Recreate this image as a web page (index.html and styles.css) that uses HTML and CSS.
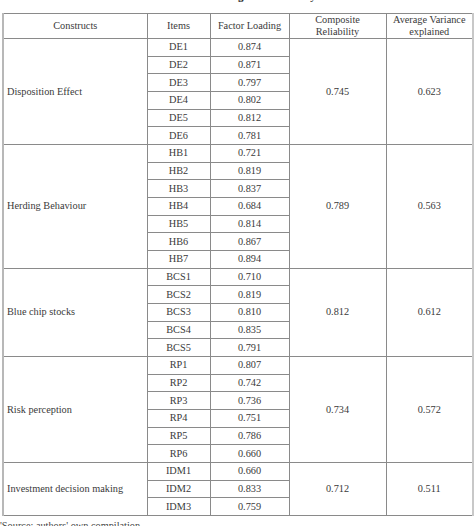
FILE: index.html
```html
<!DOCTYPE html>
<html>
<head>
<meta charset="utf-8">
<link rel="stylesheet" href="styles.css">
</head>
<body>
<div class="title"><span>Table 4: Factor Loading and Reliability</span></div>
<table class="tbl">
  <colgroup>
    <col class="c1"><col class="c2"><col class="c3"><col class="c4"><col class="c5">
  </colgroup>
  <thead>
    <tr class="hd">
      <th>Constructs</th><th>Items</th><th>Factor Loading</th><th>Composite<br>Reliability</th><th>Average Variance<br>explained</th>
    </tr>
  </thead>
  <tbody>
    <tr><td class="name" rowspan="6">Disposition Effect</td><td>DE1</td><td>0.874</td><td rowspan="6">0.745</td><td rowspan="6">0.623</td></tr>
    <tr><td>DE2</td><td>0.871</td></tr>
    <tr><td>DE3</td><td>0.797</td></tr>
    <tr><td>DE4</td><td>0.802</td></tr>
    <tr><td>DE5</td><td>0.812</td></tr>
    <tr><td>DE6</td><td>0.781</td></tr>

    <tr><td class="name" rowspan="7">Herding Behaviour</td><td>HB1</td><td>0.721</td><td rowspan="7">0.789</td><td rowspan="7">0.563</td></tr>
    <tr><td>HB2</td><td>0.819</td></tr>
    <tr><td>HB3</td><td>0.837</td></tr>
    <tr><td>HB4</td><td>0.684</td></tr>
    <tr><td>HB5</td><td>0.814</td></tr>
    <tr><td>HB6</td><td>0.867</td></tr>
    <tr><td>HB7</td><td>0.894</td></tr>

    <tr><td class="name" rowspan="5">Blue chip stocks</td><td>BCS1</td><td>0.710</td><td rowspan="5">0.812</td><td rowspan="5">0.612</td></tr>
    <tr><td>BCS2</td><td>0.819</td></tr>
    <tr><td>BCS3</td><td>0.810</td></tr>
    <tr><td>BCS4</td><td>0.835</td></tr>
    <tr><td>BCS5</td><td>0.791</td></tr>

    <tr><td class="name" rowspan="6">Risk perception</td><td>RP1</td><td>0.807</td><td rowspan="6">0.734</td><td rowspan="6">0.572</td></tr>
    <tr><td>RP2</td><td>0.742</td></tr>
    <tr><td>RP3</td><td>0.736</td></tr>
    <tr><td>RP4</td><td>0.751</td></tr>
    <tr><td>RP5</td><td>0.786</td></tr>
    <tr><td>RP6</td><td>0.660</td></tr>

    <tr><td class="name" rowspan="3">Investment decision making</td><td>IDM1</td><td>0.660</td><td rowspan="3">0.712</td><td rowspan="3">0.511</td></tr>
    <tr><td>IDM2</td><td>0.833</td></tr>
    <tr><td>IDM3</td><td>0.759</td></tr>
  </tbody>
</table>
<div class="src">'Source: authors' own compilation</div>
</body>
</html>
```
FILE: styles.css
```css
html, body {
  margin: 0;
  padding: 0;
  background: #fff;
}
body {
  font-family: "Liberation Serif", "DejaVu Serif", "Times New Roman", serif;
  font-size: 10.3px;
  color: #3a3a3a;
  width: 474px;
  height: 526px;
  overflow: hidden;
}
.title {
  height: 13px;
  overflow: hidden;
  text-align: center;
}
.title span {
  display: block;
  font-weight: bold;
  font-size: 11px;
  line-height: 12px;
  margin-top: -10px;
  padding-right: 28px;
  color: #222;
}
.tbl {
  border-collapse: collapse;
  margin-left: 2px;
  width: 470px;
  table-layout: fixed;
  border-left: 2px solid #b8b8b8;
  border-right: 2px solid #c8c8c8;
}
.c1 { width: 144px; }
.c2 { width: 63px; }
.c3 { width: 79px; }
.c4 { width: 97px; }
.c5 { width: 87px; }
.tbl th, .tbl td {
  border: 1px solid #8a8a8a;
  padding: 0;
  text-align: center;
  vertical-align: middle;
  font-weight: normal;
  line-height: 12px;
}
.tbl th {
  height: 24px;
}
.tbl td {
  height: 16.68px;
}
.tbl td.name {
  text-align: left;
  padding-left: 3px;
}
.src {
  margin-top: 4px;
  line-height: 12px;
  color: #444;
}
```
